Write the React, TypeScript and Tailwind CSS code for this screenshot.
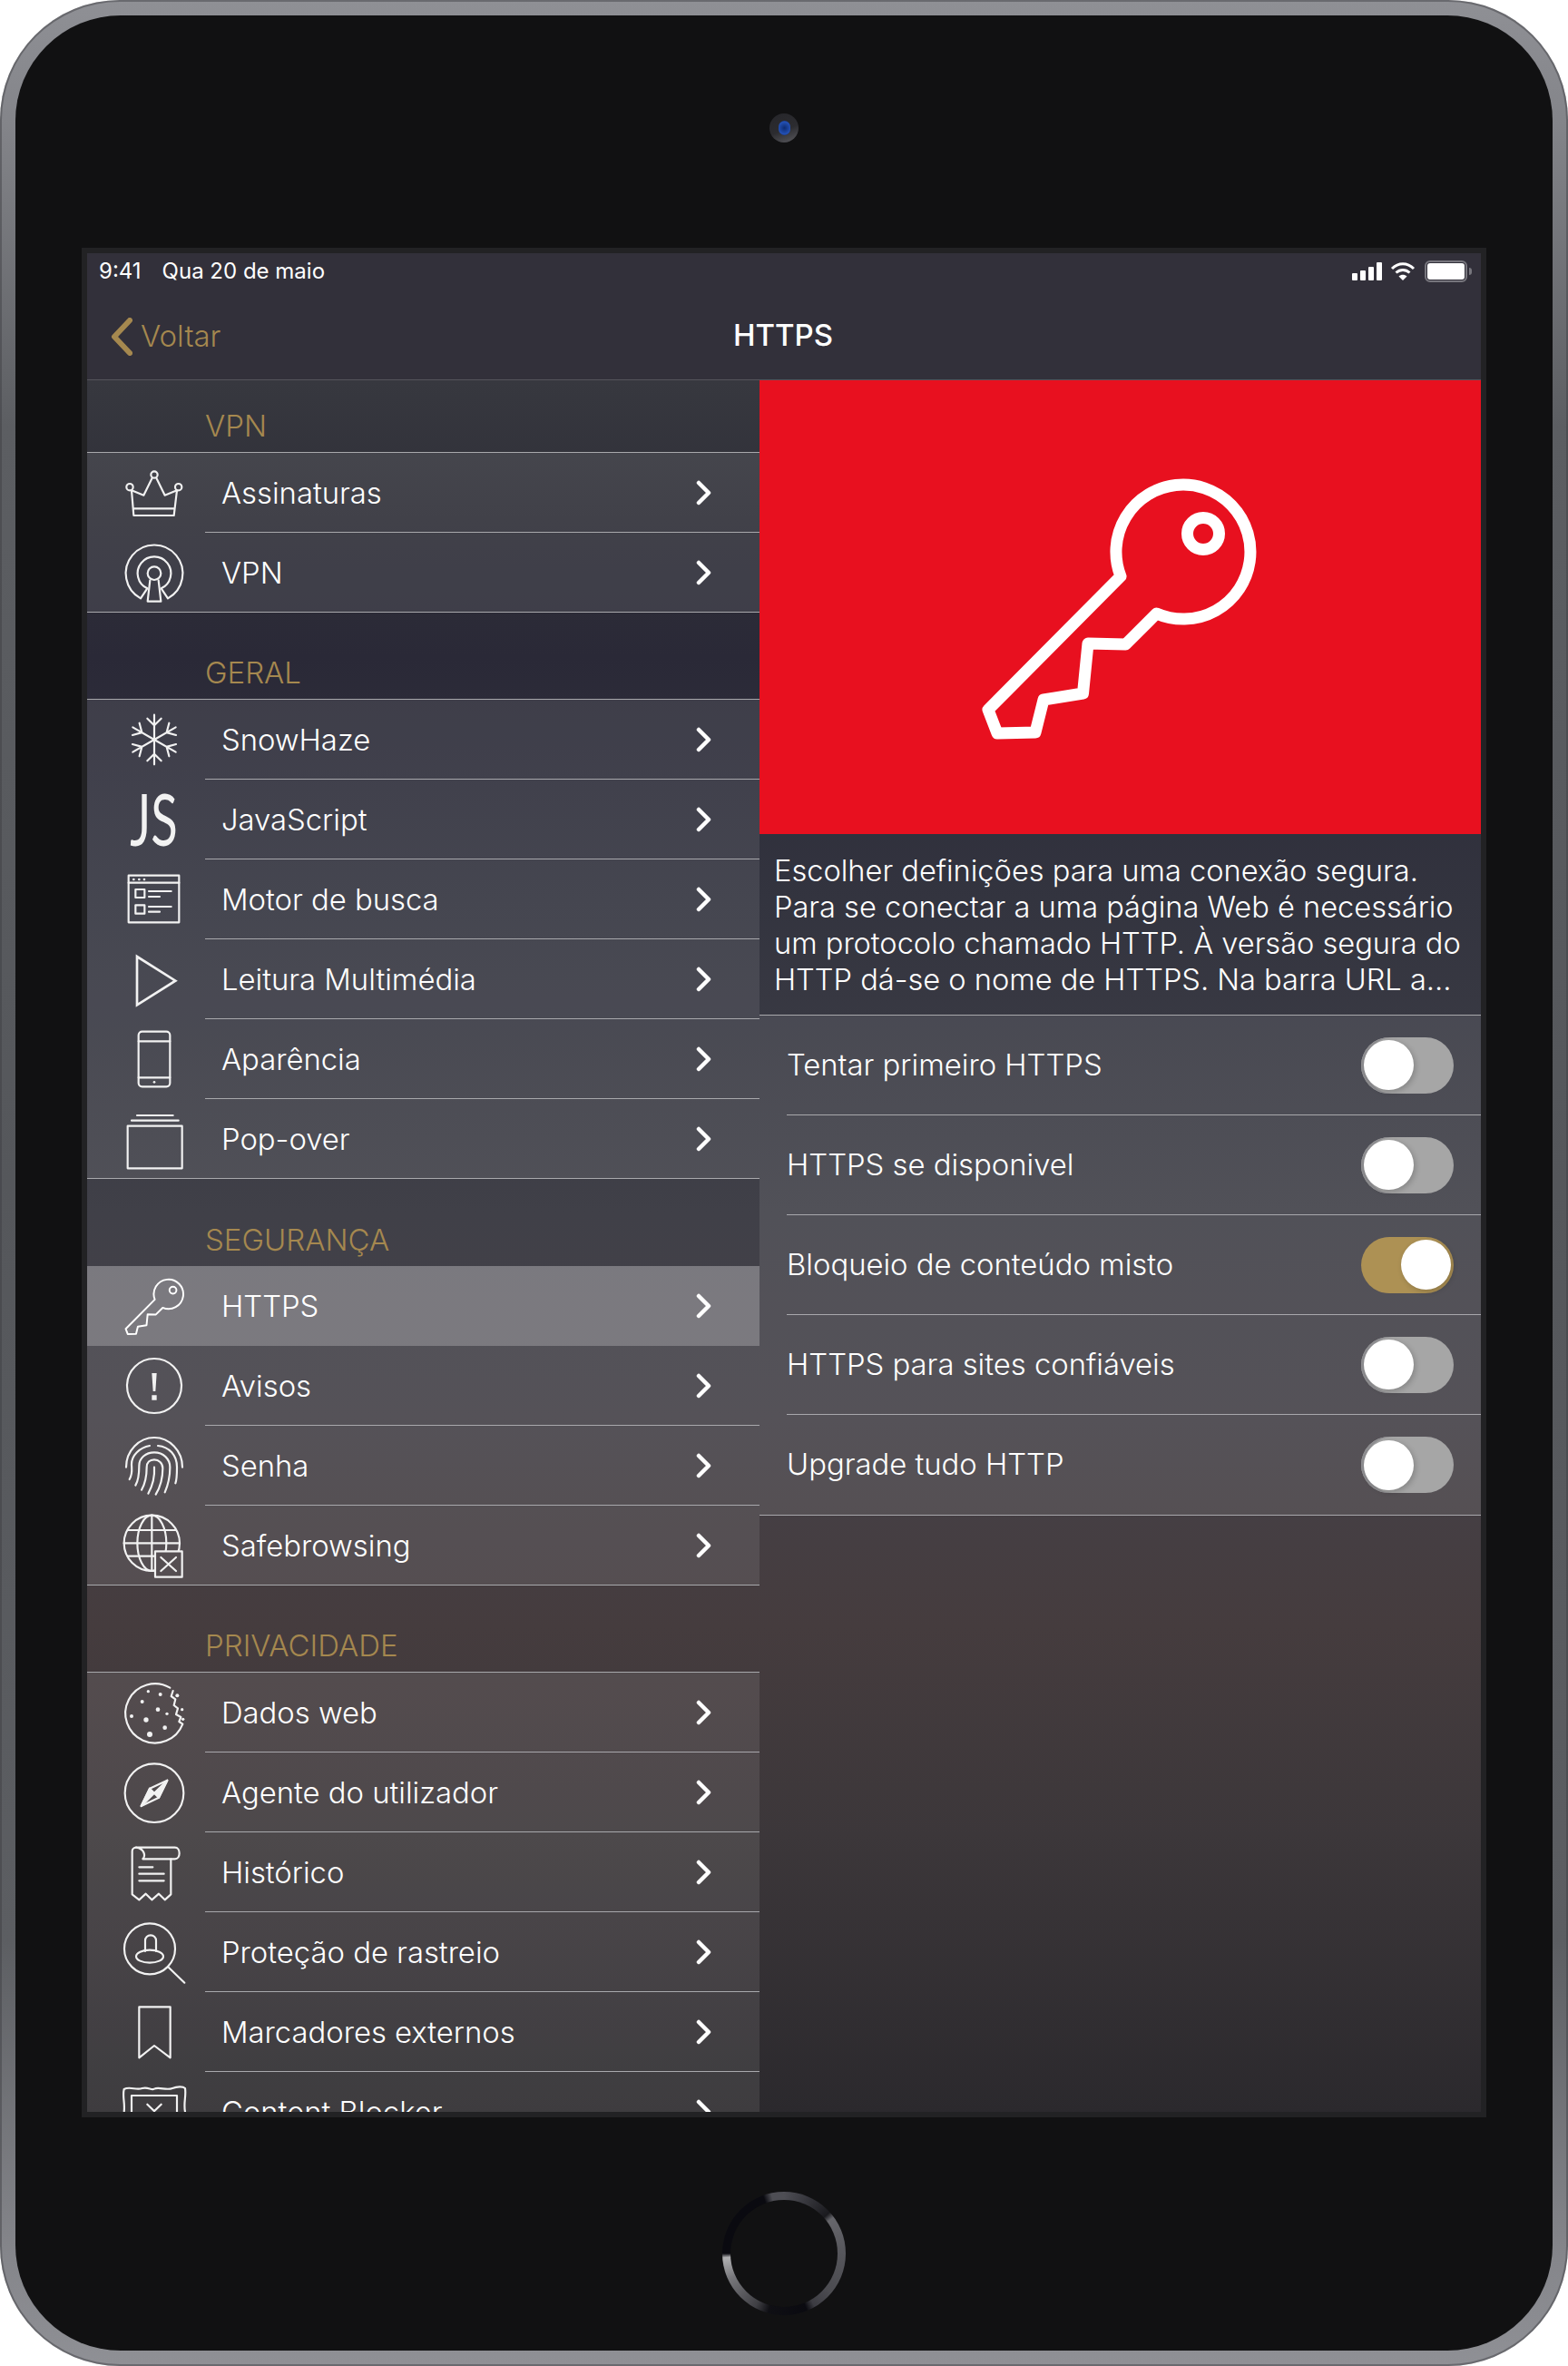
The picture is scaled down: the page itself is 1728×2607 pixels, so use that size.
import type { ReactNode } from "react";

const sans = "font-['Inter','Liberation_Sans',sans-serif]";

function Ico({ children }: { children: ReactNode }) {
  return (
    <svg
      viewBox="0 0 240 240"
      className="h-[80px] w-[80px] shrink-0"
      fill="none"
      stroke="#f2f2f2"
      strokeWidth={6.5}
      strokeLinecap="round"
      strokeLinejoin="round"
    >
      {children}
    </svg>
  );
}

function KeyShape({ className, width }: { className: string; width: number }) {
  return (
    <svg viewBox="1082 516 305 305" className={className} fill="none" stroke="#fff" strokeWidth={width} strokeLinejoin="round">
      <path d="M1235 634 A74 74 0 1 1 1274.5 675 L1240.5 709 L1199 708 L1193.5 763 L1150 770 L1141 806 L1099 807 L1089 781 Z" />
      <circle cx="1326" cy="587" r="17.5" />
    </svg>
  );
}

const Crown = () => (
  <Ico>
    <circle cx="120" cy="60" r="11" />
    <circle cx="39" cy="101" r="11" />
    <circle cx="200" cy="101" r="11" />
    <path d="M45 112 L85 128 L113 71 M127 71 L155 128 L195 112 L185 195 H52 L45 112 M50 172 H187" />
  </Ico>
);

const Vpn = () => (
  <Ico>
    <path d="M75 205 A94 94 0 1 1 165 205 L143 172 A55 55 0 1 0 97 172 Z" />
    <circle cx="120" cy="122" r="22" />
    <path d="M106 145 L98 215 H142 L134 145" />
  </Ico>
);

const Snow = () => (
  <Ico>
    {[0, 60, 120, 180, 240, 300].map((deg) => (
      <g key={deg} transform={`rotate(${deg} 120 120)`}>
        <path d="M120 120 V38 M97 50 L120 73 L143 50" />
      </g>
    ))}
  </Ico>
);

const Js = () => (
  <span className="inline-block origin-center -translate-y-[2px] scale-x-[0.68] font-['Lato',sans-serif] text-[80px] leading-[80px] text-[#f2f2f2]">JS</span>
);

const Search = () => (
  <Ico>
    <rect x="35" y="41" width="167" height="155" />
    <path d="M35 65 H202 M102 93 H176 M102 111 H138 M102 144 H176 M102 161 H138" />
    <rect x="58" y="87" width="30" height="27" />
    <rect x="58" y="139" width="30" height="28" />
    <g fill="#f2f2f2" stroke="none">
      <circle cx="52" cy="54" r="4" />
      <circle cx="70" cy="54" r="4" />
      <circle cx="87" cy="54" r="4" />
    </g>
  </Ico>
);

const Play = () => (
  <Ico>
    <path d="M63 45 V205 L190 125 Z" strokeLinejoin="miter" strokeWidth={8} />
  </Ico>
);

const Phone = () => (
  <Ico>
    <rect x="68" y="29" width="104" height="182" rx="12" />
    <path d="M68 61 H172 M68 181 H172" />
    <circle cx="120" cy="196" r="4" fill="#f2f2f2" stroke="none" />
  </Ico>
);

const Popover = () => (
  <Ico>
    <rect x="32" y="77" width="180" height="140" />
    <path d="M45 59 H200 M63 42 H182" />
  </Ico>
);

const Https = () => <KeyShape className="h-[67px] w-[67px] shrink-0" width={9} />;

const Warn = () => (
  <Ico>
    <circle cx="120" cy="120" r="90" />
    <path d="M112 78 H128 L124 138 H116 Z M112 151 H128 V167 H112 Z" fill="#f2f2f2" stroke="none" />
  </Ico>
);

const Finger = () => (
  <Ico>
    <path d="M27 125 C27 70 70 27 120 27 C170 27 213 70 213 125" />
    <path d="M38 165 C50 145 45 130 45 115 C45 85 72 60 105 54 M132 54 C170 58 195 85 195 125 C195 150 195 165 190 178" />
    <path d="M58 185 C70 165 70 140 70 120 C70 95 92 76 120 76 C150 76 172 98 172 125 C172 160 165 185 155 208" />
    <path d="M78 200 C92 175 95 150 95 125 C95 110 105 100 120 100 C135 100 148 112 148 128 C148 160 140 190 125 215" />
    <path d="M100 212 C115 185 122 155 120 125" />
  </Ico>
);

const Globe = () => (
  <Ico>
    <clipPath id="globe-cut">
      <path clipRule="evenodd" d="M0 0 H240 V240 H0 Z M123 139 H212 V224 H123 Z" />
    </clipPath>
    <g clipPath="url(#globe-cut)">
      <circle cx="112" cy="112" r="92" />
      <ellipse cx="112" cy="112" rx="48" ry="92" />
      <path d="M112 20 V204 M32 69 H192 M20 112 H204 M32 155 H192" />
    </g>
    <rect x="123" y="139" width="89" height="85" />
    <path d="M142 159 L192 204 M192 159 L142 204" />
  </Ico>
);

const Cookie = () => (
  <Ico>
    <path d="M172 38 A98 98 0 1 0 214 158 L202 150 L208 135 L192 126 L198 106 L185 96 L190 76 L176 66 L182 48" />
    <g fill="#f2f2f2" stroke="none">
      <circle cx="80" cy="84" r="6" />
      <circle cx="100" cy="50" r="5" />
      <circle cx="140" cy="60" r="6" />
      <circle cx="45" cy="132" r="6" />
      <circle cx="93" cy="144" r="8" />
      <circle cx="132" cy="110" r="7" />
      <circle cx="162" cy="124" r="5" />
      <circle cx="155" cy="170" r="7" />
      <circle cx="105" cy="192" r="9" />
      <circle cx="196" cy="64" r="6" />
      <circle cx="212" cy="110" r="5" />
      <circle cx="215" cy="142" r="5" />
    </g>
  </Ico>
);

const Compass = () => (
  <Ico>
    <circle cx="120" cy="122" r="97" />
    <path d="M77 165 L105 107 L163 80 L135 137 Z" />
    <path d="M163 80 L135 137 L120 122 Z M77 165 L105 107 L120 122 Z" fill="#f2f2f2" />
  </Ico>
);

const Scroll = () => (
  <Ico>
    <path d="M60 38 C52 38 47 44 47 50 V193 L70 211 L92 191 L112 211 L135 191 L155 211 L175 193 V76" />
    <path d="M60 38 H188 C208 38 208 76 188 76 H82 C92 66 88 42 60 38 Z" />
    <path d="M70 103 H115 M70 125 H152 M70 148 H152" />
  </Ico>
);

const Tracker = () => (
  <Ico>
    <circle cx="105" cy="109" r="84" />
    <path d="M168 171 L220 221" />
    <path d="M90 117 V82 A18 18 0 0 1 126 82 V117" />
    <ellipse cx="105" cy="134" rx="45" ry="21" />
  </Ico>
);

const Bookmark = () => (
  <Ico>
    <path d="M70 37 H173 V205 L120 165 L70 205 Z" />
  </Ico>
);

const Blocker = () => (
  <Ico>
    <path d="M20 45 C40 34 60 50 80 42 C100 36 110 50 120 44 C135 36 160 50 180 42 C195 36 215 35 222 42 C226 70 216 90 222 120 C226 150 216 180 222 210 H20 C24 180 14 150 20 120 C24 90 14 70 20 45 Z" />
    <rect x="45" y="66" width="150" height="130" />
    <path d="M97 95 L143 140 M143 95 L97 140" />
  </Ico>
);

type Item = { label: string; icon: ReactNode; selected?: boolean };

const sections: { title: string; items: Item[]; first?: boolean }[] = [
  {
    title: "VPN",
    first: true,
    items: [
      { label: "Assinaturas", icon: <Crown /> },
      { label: "VPN", icon: <Vpn /> },
    ],
  },
  {
    title: "GERAL",
    items: [
      { label: "SnowHaze", icon: <Snow /> },
      { label: "JavaScript", icon: <Js /> },
      { label: "Motor de busca", icon: <Search /> },
      { label: "Leitura Multimédia", icon: <Play /> },
      { label: "Aparência", icon: <Phone /> },
      { label: "Pop-over", icon: <Popover /> },
    ],
  },
  {
    title: "SEGURANÇA",
    items: [
      { label: "HTTPS", icon: <Https />, selected: true },
      { label: "Avisos", icon: <Warn /> },
      { label: "Senha", icon: <Finger /> },
      { label: "Safebrowsing", icon: <Globe /> },
    ],
  },
  {
    title: "PRIVACIDADE",
    items: [
      { label: "Dados web", icon: <Cookie /> },
      { label: "Agente do utilizador", icon: <Compass /> },
      { label: "Histórico", icon: <Scroll /> },
      { label: "Proteção de rastreio", icon: <Tracker /> },
      { label: "Marcadores externos", icon: <Bookmark /> },
      { label: "Content Blocker", icon: <Blocker /> },
    ],
  },
];

const toggles = [
  { label: "Tentar primeiro HTTPS", on: false },
  { label: "HTTPS se disponivel", on: false },
  { label: "Bloqueio de conteúdo misto", on: true },
  { label: "HTTPS para sites confiáveis", on: false },
  { label: "Upgrade tudo HTTP", on: false },
];

function Chevron() {
  return (
    <svg viewBox="0 0 18 28" className="h-[28px] w-[18px] shrink-0" fill="none" stroke="#fff" strokeWidth={4.5} strokeLinecap="round" strokeLinejoin="round">
      <path d="M3 3 L14 14 L3 25" />
    </svg>
  );
}

function Row({ item, last }: { item: Item; last: boolean }) {
  return (
    <div
      className={`flex h-[88px] items-stretch ${item.selected ? "bg-white/30" : "bg-white/[0.09]"} ${
        last ? "border-b border-[#a8a8ac]" : ""
      }`}
    >
      <div className="flex w-[130px] shrink-0 items-center pl-[34px]">
        <div className="flex h-[80px] w-[80px] items-center justify-center">{item.icon}</div>
      </div>
      <div
        className={`flex flex-1 items-center justify-between pl-[18px] pr-[52px] ${
          item.selected || last ? "" : "border-b border-[#a8a8ac]"
        }`}
      >
        <span className="pt-[2px] text-[32.8px] font-light text-white">{item.label}</span>
        <Chevron />
      </div>
    </div>
  );
}

function Switch({ on }: { on: boolean }) {
  return (
    <div
      className={`flex h-[62px] w-[102px] items-center rounded-full p-[3px] ${
        on ? "justify-end bg-[#ad9154]" : "justify-start bg-[#a6a6a6] shadow-[inset_4px_0_0_#8f8f92]"
      }`}
    >
      <div className="h-[55px] w-[55px] rounded-full bg-white shadow-[2px_2px_6px_rgba(0,0,0,0.2)]" />
    </div>
  );
}

function StatusIcons() {
  return (
    <div className="flex items-center">
      <div className="flex h-[20px] items-end gap-[3px]">
        <div className="h-[8px] w-[6px] rounded-[1px] bg-white" />
        <div className="h-[11px] w-[6px] rounded-[1px] bg-white" />
        <div className="h-[15px] w-[6px] rounded-[1px] bg-white" />
        <div className="h-[20px] w-[6px] rounded-[1px] bg-white" />
      </div>
      <svg viewBox="0 0 28 20" className="ml-[9px] h-[20px] w-[28px]" fill="none" stroke="#fff" strokeWidth={3}>
        <path d="M2 7 C9 0 19 0 26 7" />
        <path d="M6.5 11.5 C11 7.5 17 7.5 21.5 11.5" />
        <path d="M14 20 L9.5 15.5 C12 13 16 13 18.5 15.5 Z" fill="#fff" stroke="none" />
      </svg>
      <div className="ml-[10px] flex h-[24px] w-[47px] items-center rounded-[6px] border-2 border-[#77767d] p-[1px]">
        <div className="h-full w-full rounded-[3px] bg-white" />
      </div>
      <div className="ml-[2px] h-[8px] w-[3px] rounded-r-full bg-[#77767d]" />
    </div>
  );
}

export default function App() {
  return (
    <div className={`h-[2607px] w-[1728px] bg-white ${sans}`}>
      <div className="h-full w-full rounded-[132px] bg-[linear-gradient(180deg,#8f9095_0%,#84858a_5%,#5c5e62_18%,#55575b_50%,#5c5e62_82%,#84858a_95%,#8f9095_100%)] p-[17px] shadow-[inset_0_0_0_2px_rgba(60,60,65,0.45)]">
        <div className="flex h-full w-full flex-col items-center rounded-[116px] bg-[#111112] pt-[108px]">
          <div className="flex h-[32px] w-[32px] items-center justify-center rounded-full bg-[linear-gradient(160deg,#26262a_0%,#2c2c30_55%,#5a5a5f_100%)]">
            <div className="h-[16px] w-[13px] rounded-full bg-[radial-gradient(circle,#0e2c72_0%,#2350b4_65%,#0b1a44_100%)]" />
          </div>

          <div className="mt-[116px] flex h-[2060px] w-[1548px] flex-col overflow-hidden border-[6px] border-[#222224] bg-[#32303a]">
            <div className="flex h-[40px] shrink-0 items-center justify-between pl-[13px] pr-[10px] text-[24px] text-white">
              <div className="flex gap-[23px]">
                <span>9:41</span>
                <span>Qua 20 de maio</span>
              </div>
              <StatusIcons />
            </div>
            <div className="relative flex h-[100px] shrink-0 items-center justify-center border-b border-[#55545c]">
              <div className="absolute left-[26px] top-[27px] flex items-center gap-[9px] text-[#a5884f]">
                <svg viewBox="0 0 24 42" className="h-[42px] w-[24px]" fill="none" stroke="#a5884f" strokeWidth={6} strokeLinecap="round" strokeLinejoin="round">
                  <path d="M21 3 L4 21 L21 39" />
                </svg>
                <span className="text-[33px] font-light">Voltar</span>
              </div>
              <span className="pt-[2px] pr-[2px] text-[33px] font-medium text-white">HTTPS</span>
            </div>

            <div className="flex min-h-0 flex-1 bg-[linear-gradient(180deg,#37383f_0%,#2f2f38_8%,#2a2937_16%,#33343f_30%,#404048_48%,#454148_60%,#453c3e_72%,#3c373a_84%,#2b292d_100%)]">
              <div className="w-[741px] shrink-0 overflow-hidden">
                {sections.map((s) => (
                  <div key={s.title}>
                    <div
                      className={`flex items-end pb-[5px] pl-[130px] ${s.first ? "h-[80px]" : "h-[96px]"} ${
                        s.items[0].selected ? "" : "border-b border-[#a8a8ac]"
                      }`}
                    >
                      <span className="text-[33px] leading-[48px] font-light text-[#a5884f]">{s.title}</span>
                    </div>
                    {s.items.map((it, i) => (
                      <Row key={it.label} item={it} last={i === s.items.length - 1} />
                    ))}
                  </div>
                ))}
              </div>

              <div className="min-w-0 flex-1">
                <div className="flex h-[500px] items-center justify-center bg-[#e8101f]">
                  <KeyShape className="h-[305px] w-[305px]" width={13} />
                </div>
                <div className="flex h-[200px] flex-col justify-center border-b border-[#a8a8ac] pl-[16px] text-[32.6px] leading-[40px] font-light text-white">
                  <p>Escolher definições para uma conexão segura.</p>
                  <p>Para se conectar a uma página Web é necessário</p>
                  <p>um protocolo chamado HTTP. À versão segura do</p>
                  <p>HTTP dá-se o nome de HTTPS. Na barra URL a...</p>
                </div>
                <div className="border-b border-[#a8a8ac] bg-white/[0.09]">
                  {toggles.map((t, i) => (
                    <div key={t.label} className="pl-[30px]">
                      <div className={`flex h-[110px] items-center justify-between pr-[30px] ${i < toggles.length - 1 ? "border-b border-[#a8a8ac]" : ""}`}>
                        <span className="text-[32.8px] font-light text-white">{t.label}</span>
                        <Switch on={t.on} />
                      </div>
                    </div>
                  ))}
                </div>
              </div>
            </div>
          </div>

          <div className="mt-[82px] flex h-[136px] w-[136px] items-center justify-center rounded-full bg-[conic-gradient(from_0deg,#4e4e54_0deg,#3a3a40_20deg,#1a1a1e_48deg,#66666b_54deg,#56565b_90deg,#4c4c51_130deg,#3c3c42_150deg,#0a0a10_158deg,#0f0f14_195deg,#3f3f44_208deg,#77777b_245deg,#b0b0b2_266deg,#0a0a10_270deg,#0a0a10_340deg,#4e4e54_348deg,#4e4e54_360deg)]">
            <div className="h-[118px] w-[118px] rounded-full bg-[#111112]" />
          </div>
        </div>
      </div>
    </div>
  );
}
